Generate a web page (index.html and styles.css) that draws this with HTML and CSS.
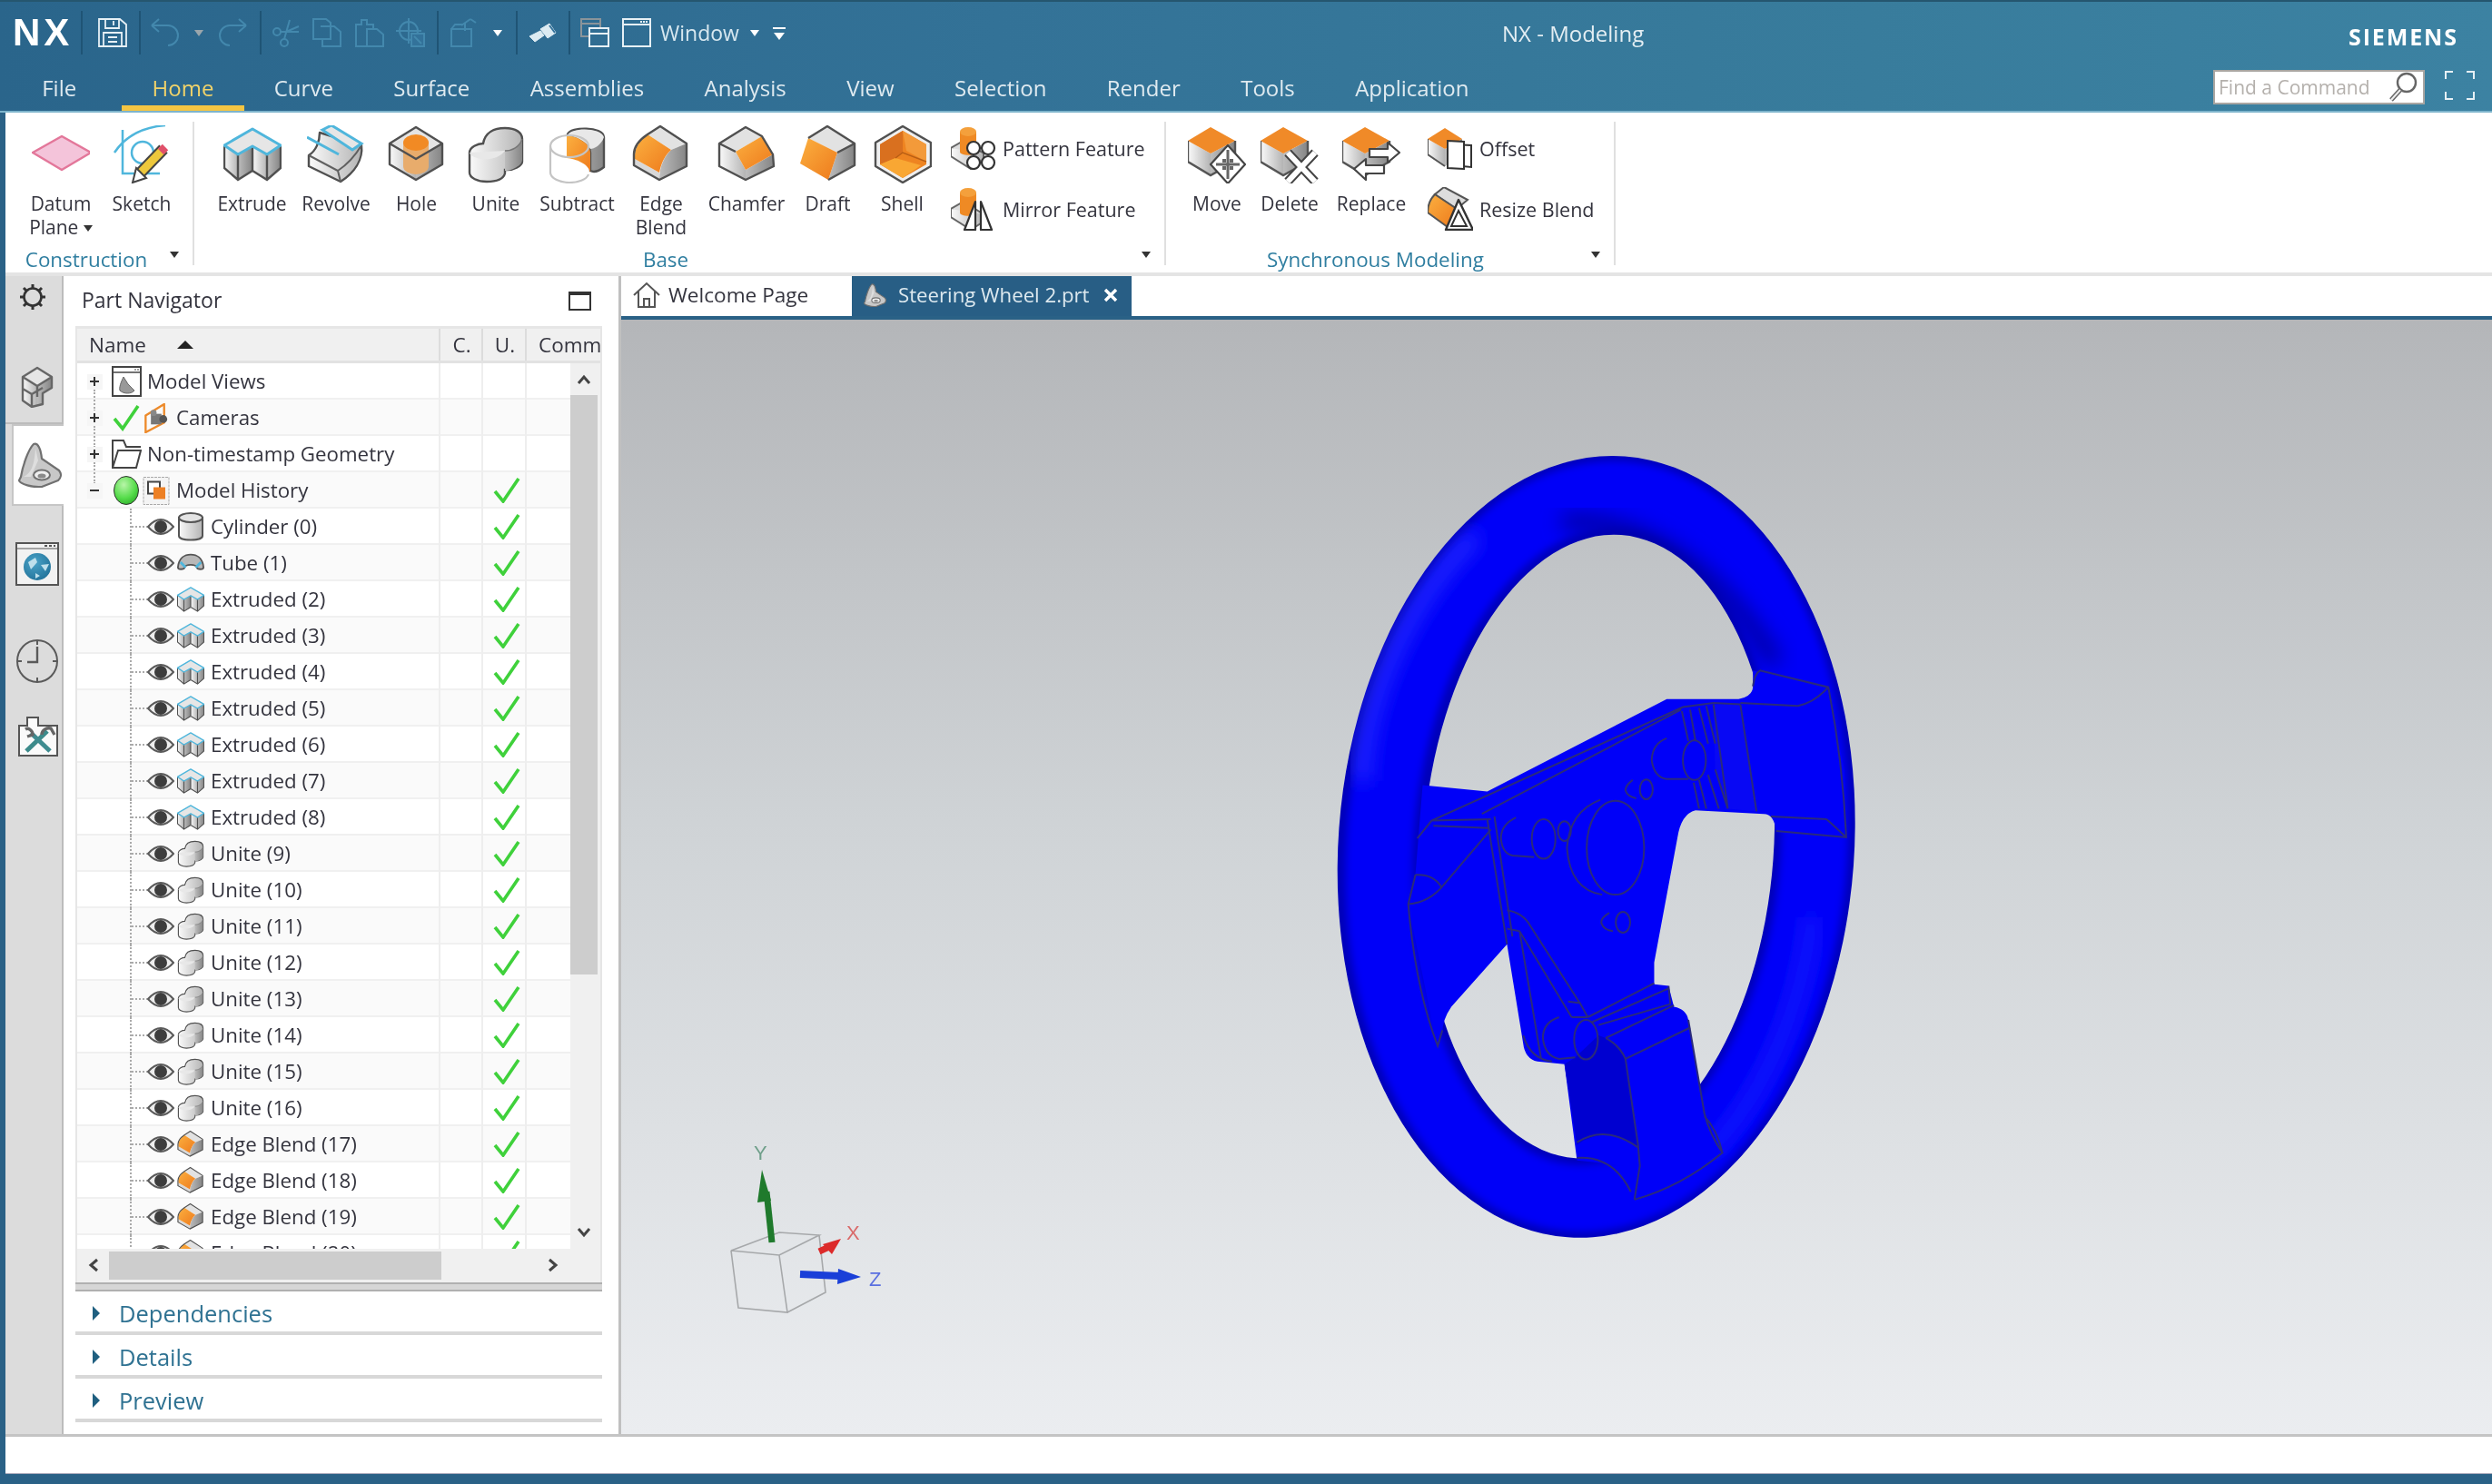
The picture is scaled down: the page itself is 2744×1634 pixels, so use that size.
FILE: index.html
```html
<!DOCTYPE html>
<html lang="en">
<head>
<meta charset="utf-8">
<title>NX - Modeling</title>
<link rel="stylesheet" href="styles.css">
</head>
<body>
<svg class="defs" aria-hidden="true">
  <defs>
    <linearGradient id="gl" x1="0" x2="1" y1="0" y2="0"><stop offset="0" stop-color="#fafafa"/><stop offset="1" stop-color="#b4b4b4"/></linearGradient>
    <linearGradient id="gd" x1="0" x2="1" y1="0" y2="0"><stop offset="0" stop-color="#bdbdbd"/><stop offset="1" stop-color="#858585"/></linearGradient>
    <linearGradient id="go" x1="0" x2="1" y1="0" y2="1"><stop offset="0" stop-color="#fbb040"/><stop offset="1" stop-color="#ee7a1c"/></linearGradient>
    <radialGradient id="gball" cx=".4" cy=".3" r=".8"><stop offset="0" stop-color="#b8f5a8"/><stop offset=".6" stop-color="#55dc4a"/><stop offset="1" stop-color="#2aa828"/></radialGradient>
    <radialGradient id="gglobe" cx=".4" cy=".35" r=".8"><stop offset="0" stop-color="#4aa3c8"/><stop offset="1" stop-color="#1d6c94"/></radialGradient>
  </defs>
  <symbol id="i-datum" viewBox="0 0 64 64"><path d="M1 30 33 12 65 30 33 49Z" fill="#f4c4da" stroke="#e3779a" stroke-width="2.5" stroke-linejoin="round"/></symbol>
  <symbol id="i-sketch" viewBox="0 0 64 64"><g fill="none" stroke="#4fb6dc" stroke-width="2.5"><path d="M2 30Q20 3 58 0"/><path d="M11 5V53H52"/><circle cx="33" cy="30" r="12"/></g><path d="M29 54 56 26" stroke="#444" stroke-width="13"/><path d="M29 54 56 26" stroke="#edc83c" stroke-width="9"/><path d="M53 29 58 24" stroke="#e0506a" stroke-width="9"/><path d="M22 63 26 47 37 58Z" fill="#fff" stroke="#444" stroke-width="2"/></symbol>
  <symbol id="i-extrude" viewBox="0 0 64 64"><path d="M1 22 16 32V60L1 47Z" fill="url(#gl)"/><path d="M16 32 32 23V50L16 60Z" fill="url(#gd)"/><path d="M32 23 48 32V60L32 50Z" fill="url(#gl)"/><path d="M48 32 63 22V47L48 60Z" fill="url(#gd)"/><path d="M1 22V47L16 60 32 50 48 60 63 47V22M16 32V60M32 23V50M48 32V60" fill="none" stroke="#505050" stroke-width="2.4"/><path d="M1 22 32 4 63 22 48 32 32 23 16 32Z" fill="#e6e6e6" stroke="#4fb6dc" stroke-width="3" stroke-linejoin="round"/></symbol>
  <symbol id="i-revolve" viewBox="0 0 64 64"><path d="M14 8 60 22C62 38 52 52 37 62L2 45V33C10 28 14 18 14 8Z" fill="url(#gl)" stroke="#505050" stroke-width="2.4" stroke-linejoin="round"/><path d="M2 33 34 50 37 62M34 50C46 42 54 32 60 22" fill="none" stroke="#606060" stroke-width="2"/><path d="M17 5 27 0 60 20 50 27Z" fill="#e6e6e6" stroke="#4fb6dc" stroke-width="3"/><path d="M0 13 35 32" stroke="#4fb6dc" stroke-width="3"/></symbol>
  <symbol id="i-hole" viewBox="0 0 64 64"><path d="M2 20 31 37V60L2 43Z" fill="url(#gl)"/><path d="M31 37 60 20V43L31 60Z" fill="url(#gd)"/><path d="M31 2 60 20 31 37 2 20Z" fill="#e4e4e4"/><path d="M17 19V45A14 9 0 0 0 45 45V19Z" fill="#e8ac6c"/><ellipse cx="31" cy="19" rx="14" ry="9" fill="#f18a24"/><path d="M31 2 60 20V43L31 60 2 43V20ZM2 20 31 37 60 20" fill="none" stroke="#505050" stroke-width="2.4" stroke-linejoin="round"/></symbol>
  <symbol id="i-unite" viewBox="0 0 64 64"><path d="M3 30C3 24 12 20 18 20 20 8 30 3 42 3 54 3 61 8 61 15V40C61 44 52 50 42 49V53C40 60 30 62 22 62 12 62 3 58 3 52Z" fill="url(#gl)" stroke="#505050" stroke-width="2.4"/><path d="M42 28V50C50 50 61 44 61 38V16C58 24 50 28 42 28Z" fill="url(#gd)"/><path d="M3 30C5 38 32 42 42 28" fill="#e8e8e8" stroke="none"/><path d="M61 15C58 24 50 28 42 28" fill="none" stroke="#777" stroke-width="1.5"/></symbol>
  <symbol id="i-subtract" viewBox="0 0 64 64"><path d="M21 10C24 1 60 1 61 13V46C56 50 50 52 46 50V30C46 20 32 12 21 11Z" fill="url(#gd)" stroke="#505050" stroke-width="2.4"/><path d="M21 11C24 2 58 2 61 13 58 22 50 26 46 26 42 18 30 12 21 11Z" fill="#e8e8e8"/><path d="M20 11C32 12 46 20 46 30V52C44 42 30 37 20 36Z" fill="url(#go)"/><ellipse cx="23" cy="23" rx="21" ry="12" fill="none" stroke="#c4c4c4" stroke-width="2.2"/><path d="M2 23V52C2 58 12 63 23 63 32 63 42 60 44 54" fill="none" stroke="#c4c4c4" stroke-width="2.2"/></symbol>
  <symbol id="i-edge" viewBox="0 0 64 64"><path d="M31 1 60 20 43 27 17 10Z" fill="#e2e2e2"/><path d="M43 27 60 20V45L30 60C30 44 36 34 43 27Z" fill="url(#gd)"/><path d="M3 37 30 52 30 60 2 44Z" fill="#d8d8d8"/><path d="M17 10 43 27C36 33 32 42 30 52L3 37C2 26 8 16 17 10Z" fill="url(#go)"/><path d="M17 10 31 1 60 20V45L30 60 2 44V32C2 24 8 16 17 10Z" fill="none" stroke="#505050" stroke-width="2.4" stroke-linejoin="round"/></symbol>
  <symbol id="i-chamfer" viewBox="0 0 64 64"><path d="M31 2 49 12 20 29 2 20Z" fill="#e2e2e2"/><path d="M2 20 20 29 31 49V60L2 45Z" fill="url(#gl)"/><path d="M31 49 61 32 62 45 31 60Z" fill="url(#gd)"/><path d="M49 12 61 32 31 49 20 29Z" fill="url(#go)"/><path d="M31 2 49 12 61 32 62 45 31 60 2 45V20ZM2 20 20 29" fill="none" stroke="#505050" stroke-width="2.4" stroke-linejoin="round"/></symbol>
  <symbol id="i-draft" viewBox="0 0 64 64"><path d="M31 1 61 20 42 30 10 14Z" fill="#e2e2e2"/><path d="M42 30 61 20V44L32 60Z" fill="url(#gd)"/><path d="M10 14 42 30 32 60 1 42Z" fill="url(#go)"/><path d="M10 14 31 1 61 20V44L32 60M42 30 61 20" fill="none" stroke="#505050" stroke-width="2.4" stroke-linejoin="round"/></symbol>
  <symbol id="i-shell" viewBox="0 0 64 64"><path d="M32 1 63 19V45L32 63 2 45V19Z" fill="#efefef" stroke="#505050" stroke-width="2.4" stroke-linejoin="round"/><path d="M32 6 58 21V43L32 58 7 43V21Z" fill="#ee8421"/><path d="M7 21 32 6V30L24 36 7 43Z" fill="#d9701f"/><path d="M32 6 58 21V40L36 28Z" fill="#f39a3a"/><path d="M24 36 52 44 32 58 7 43Z" fill="#f9a733"/><path d="M24 36 32 30 58 40" fill="none" stroke="#b85e14" stroke-width="1.5"/></symbol>
  <symbol id="i-cube" viewBox="0 0 64 64"><path d="M0 17 25 31V55L0 40Z" fill="url(#gl)"/><path d="M25 31 52 17V40L25 55Z" fill="url(#gd)"/><path d="M25 2 52 17 25 31 0 17Z" fill="#f08a28"/><path d="M0 17V40L25 55 52 40V17" fill="none" stroke="#555" stroke-width="2.4"/></symbol>
  <symbol id="i-move" viewBox="0 0 64 64"><use href="#i-cube" width="64" height="64"/><path d="M44 22 63 43 44 64 25 43Z" fill="#fff" stroke="#444" stroke-width="2.2" stroke-linejoin="round"/><path d="M44 27V59M31 43H57" stroke="#666" stroke-width="3"/><path d="M38 37h4v4h-4zM46 37h4v4h-4zM38 45h4v4h-4zM46 45h4v4h-4z" fill="#666"/></symbol>
  <symbol id="i-delete" viewBox="0 0 64 64"><use href="#i-cube" width="64" height="64"/><path d="M30 30 60 62M60 30 30 62" stroke="#444" stroke-width="10"/><path d="M30 30 60 62M60 30 30 62" stroke="#fff" stroke-width="6"/></symbol>
  <symbol id="i-replace" viewBox="0 0 64 64"><use href="#i-cube" width="64" height="64"/><path d="M30 26H50V19L63 30 50 41V35H30Z" fill="#fff" stroke="#444" stroke-width="2.2" stroke-linejoin="round"/><path d="M46 44H26V37L13 48 26 60V53H46Z" fill="#fff" stroke="#444" stroke-width="2.2" stroke-linejoin="round"/></symbol>
  <symbol id="i-offset" viewBox="0 0 50 48"><path d="M0 14 19 25V44L0 31Z" fill="url(#gl)"/><path d="M19 25 38 14V31L19 44Z" fill="url(#gd)"/><path d="M19 2 38 14 19 25 0 14Z" fill="#f08a28"/><path d="M0 14V31L19 44" fill="none" stroke="#555" stroke-width="2"/><path d="M27 20 48 21V45L38 44" fill="#fff" stroke="#333" stroke-width="2"/><path d="M22 16 40 17V47L22 46Z" fill="#fff" stroke="#333" stroke-width="2"/></symbol>
  <symbol id="i-resize" viewBox="0 0 50 48"><path d="M18 0 44 14 32 24 8 8Z" fill="#ddd" stroke="#555" stroke-width="2"/><path d="M8 8 32 24 22 44 0 28C0 20 2 14 8 8Z" fill="url(#go)" stroke="#555" stroke-width="2"/><path d="M34 14 50 47H20Z" fill="#fff" stroke="#333" stroke-width="2.4" stroke-linejoin="round"/><path d="M34 26 43 43H26Z" fill="#fff" stroke="#333" stroke-width="2"/></symbol>
  <symbol id="i-base" viewBox="0 0 50 48"><path d="M0 24 14 16 36 30 22 38Z" fill="#ddd" stroke="#666" stroke-width="2"/><path d="M0 24V33L22 47 36 38V30" fill="url(#gl)" stroke="#666" stroke-width="2"/><path d="M10 6V28C10 33 28 33 28 28V6Z" fill="#ef8a24"/><ellipse cx="19" cy="6" rx="9" ry="5" fill="#f4a03c"/></symbol>
  <symbol id="i-pattern" viewBox="0 0 50 48"><use href="#i-base" width="50" height="48"/><g fill="#fff" stroke="#333" stroke-width="2.2"><circle cx="25" cy="24" r="7"/><circle cx="41" cy="24" r="7"/><circle cx="25" cy="40" r="7"/><circle cx="41" cy="40" r="7"/></g></symbol>
  <symbol id="i-mirror" viewBox="0 0 50 48"><use href="#i-base" width="50" height="48"/><path d="M27 16 15 47H27ZM33 16 45 47H33Z" fill="#fff" stroke="#333" stroke-width="2.2" stroke-linejoin="round"/></symbol>
  <symbol id="i-eye" viewBox="0 0 30 24"><path d="M1 12Q15-4 29 12 15 28 1 12Z" fill="#eee" stroke="#5a5a5a" stroke-width="2"/><circle cx="15" cy="12" r="7" fill="#3d3d3d"/></symbol>
  <symbol id="i-cyl" viewBox="0 0 30 32"><path d="M2 6V26C2 32 28 32 28 26V6Z" fill="url(#gl)" stroke="#555" stroke-width="2"/><ellipse cx="15" cy="6" rx="13" ry="5" fill="#e4e4e4" stroke="#555" stroke-width="2"/></symbol>
  <symbol id="i-tube" viewBox="0 0 32 32"><path d="M1 21C2 10 9 6 16 6 23 6 30 10 31 21 31 24 24 24 23 21 22 17 10 17 9 21 8 24 1 24 1 21Z" fill="#b8b8b8" stroke="#555" stroke-width="2"/><path d="M4 15 10 21M28 15 22 21" stroke="#4fb6dc" stroke-width="3"/></symbol>
  <symbol id="i-check" viewBox="0 0 30 28"><path d="M2 15 11 26 28 1" fill="none" stroke="#3fd13b" stroke-width="3.6"/></symbol>
  <symbol id="i-plus" viewBox="0 0 16 16"><path d="M3 8H13M8 3V13" stroke="#333" stroke-width="2"/></symbol>
  <symbol id="i-minus" viewBox="0 0 16 16"><path d="M3 8H13" stroke="#333" stroke-width="2"/></symbol>
  <symbol id="i-views" viewBox="0 0 33 34"><rect x="1" y="1" width="31" height="32" fill="#fff" stroke="#444" stroke-width="2"/><path d="M1 7H32" stroke="#444" stroke-width="1.5"/><path d="M25 4H30" stroke="#444" stroke-dasharray="2 1"/><path d="M13 12C10 18 8 24 9 27 13 31 22 31 25 27L18 20Z" fill="#999" stroke="#666"/></symbol>
  <symbol id="i-camera" viewBox="0 0 30 34"><path d="M3 14 24 1V22L3 33Z" fill="none" stroke="#ed8a2a" stroke-width="2.4"/><rect x="9" y="12" width="12" height="12" fill="#777"/><circle cx="23" cy="18" r="4.5" fill="#555"/><circle cx="12" cy="11" r="3.5" fill="#888"/></symbol>
  <symbol id="i-folder" viewBox="0 0 33 34"><path d="M1 32V2H13L16 9H32" fill="none" stroke="#444" stroke-width="2"/><path d="M1 32 7 13H32L27 32Z" fill="#fff" stroke="#444" stroke-width="2"/></symbol>
  <symbol id="i-history" viewBox="0 0 30 32"><rect x="1" y="1" width="28" height="30" fill="#f4f4f4" stroke="#aaa" stroke-dasharray="3 1"/><rect x="6" y="6" width="13" height="13" fill="#fff" stroke="#444" stroke-width="2"/><rect x="12" y="12" width="13" height="13" fill="#ed8024"/></symbol>
  <symbol id="i-part" viewBox="0 0 50 50"><path d="M5 38C7 26 13 8 19 2 24 0 27 8 28 18L47 31C50 35 50 38 46 42L28 49C18 50 4 46 3 42Z" fill="#c8c8c8" stroke="#707070" stroke-width="2.2" stroke-linejoin="round"/><path d="M8 38C16 34 20 26 21 6L24 20 16 38Z" fill="#dedede"/><ellipse cx="28" cy="36" rx="9" ry="5.5" fill="#eee" stroke="#707070" stroke-width="2"/><ellipse cx="28" cy="37" rx="4.5" ry="2.6" fill="#8a8a8a"/></symbol>
</svg>

<div class="app">
  <header class="topbar">
    <div class="qat">
      <div class="logo">NX</div>
      <span class="sep"></span>
      <svg class="qi m4" viewBox="0 0 32 32"><g fill="none" stroke="#e6f0f5" stroke-width="1.8"><path d="M1 1H24L31 7V31H1Z"/><path d="M8 1V11H23V1M17 3V8"/><path d="M6 31V16H26V31M11 21H21M11 26H21"/></g></svg>
      <span class="sep"></span>
      <svg class="qi n3" viewBox="0 0 32 32"><path d="M2 8 10 1M2 8 10 15M2 8H20A11 11 0 0 1 20 30" fill="none" stroke="#4388ad" stroke-width="2"/></svg>
      <span class="caret dim m4"></span>
      <svg class="qi m4" viewBox="0 0 32 32"><path d="M30 8 22 1M30 8 22 15M30 8H12A11 11 0 0 0 12 30" fill="none" stroke="#4388ad" stroke-width="2"/></svg>
      <span class="sep"></span>
      <svg class="qi n2" viewBox="0 0 32 32"><g fill="none" stroke="#4388ad" stroke-width="2"><circle cx="6" cy="15" r="4"/><circle cx="14" cy="27" r="4"/><path d="M10 15H30M14 23 20 2M16 15 30 9"/></g></svg>
      <svg class="qi" viewBox="0 0 32 32"><path d="M1 23V1H15L20 5V23ZM9 9H24L31 15V31H11V23" fill="none" stroke="#4388ad" stroke-width="2"/></svg>
      <svg class="qi m2" viewBox="0 0 32 32"><path d="M14 31H1V7H7V2H13V7H20V12M13 12H24L31 18V31H13Z" fill="none" stroke="#4388ad" stroke-width="2"/></svg>
      <svg class="qi" viewBox="0 0 32 32"><g fill="none" stroke="#4388ad" stroke-width="2"><circle cx="14" cy="14" r="10"/><path d="M14 0V28M0 14H28"/><rect x="17" y="17" width="14" height="14" fill="#33729a"/><path d="M20 20 28 28"/></g></svg>
      <span class="sep"></span>
      <svg class="qi" viewBox="0 0 32 32"><path d="M1 12V31H23V12ZM1 12 5 7H14M16 14V5M12 8 22 1M22 1 28 5" fill="none" stroke="#4388ad" stroke-width="2"/></svg>
      <span class="caret m2"></span>
      <span class="sep m2"></span>
      <svg class="qi n2" viewBox="0 0 32 32"><path d="M2 20 14 14 18 19 8 26ZM14 12 24 6 31 16 22 22Z" fill="#dcebf2" stroke="#dcebf2"/><path d="M24 8 30 16" stroke="#33729a" stroke-width="2"/></svg>
      <span class="sep"></span>
      <svg class="qi n2" viewBox="0 0 32 32"><path d="M10 20H1V1H22V10M1 6H22" fill="none" stroke="#8a949a" stroke-width="2"/><path d="M10 11H31V31H10ZM10 17H31" fill="none" stroke="#e6f0f5" stroke-width="2"/></svg>
      <svg class="qi m1" viewBox="0 0 32 32"><path d="M1 1H31V31H1ZM1 7H31" fill="none" stroke="#e6f0f5" stroke-width="2"/><path d="M20 4H28" stroke="#e6f0f5" stroke-dasharray="2 1" stroke-width="2"/></svg>
      <span class="wintext">Window</span>
      <span class="caret n4"></span>
      <span class="more m2"></span>
      <span class="title">NX - Modeling</span>
      <span class="siemens">SIEMENS</span>
    </div>
    <nav class="menu">
      <span class="mtab first">File</span>
      <span class="mtab active">Home</span>
      <span class="mtab">Curve</span>
      <span class="mtab">Surface</span>
      <span class="mtab">Assemblies</span>
      <span class="mtab">Analysis</span>
      <span class="mtab">View</span>
      <span class="mtab">Selection</span>
      <span class="mtab">Render</span>
      <span class="mtab">Tools</span>
      <span class="mtab">Application</span>
      <div class="search">
        <span class="placeholder">Find a Command</span>
        <svg class="glass" viewBox="0 0 32 34"><circle cx="20" cy="12" r="10" fill="#fff" stroke="#666" stroke-width="2.4"/><path d="M13 20 3 31" stroke="#666" stroke-width="5"/><path d="M13 20 3 31" stroke="#eee" stroke-width="2"/></svg>
      </div>
      <svg class="full" viewBox="0 0 33 32"><path d="M1 9V1H9M24 1H32V9M1 23V31H9M24 31H32V23" fill="none" stroke="#e6f0f5" stroke-width="2"/></svg>
    </nav>
  </header>

  <section class="ribbon">
    <div class="group g-con">
      <div class="cmds">
        <div class="btn w90"><svg class="ic"><use href="#i-datum"/></svg><span>Datum<br>Plane <i class="mini"></i></span></div>
        <div class="btn w88"><svg class="ic"><use href="#i-sketch"/></svg><span>Sketch</span></div>
      </div>
      <div class="glabel gl-con">Construction<i class="gcaret"></i></div>
    </div>
    <div class="group g-base">
      <div class="cmds">
        <div class="btn w95"><svg class="ic"><use href="#i-extrude"/></svg><span>Extrude</span></div>
        <div class="btn w90"><svg class="ic"><use href="#i-revolve"/></svg><span>Revolve</span></div>
        <div class="btn w87"><svg class="ic"><use href="#i-hole"/></svg><span>Hole</span></div>
        <div class="btn w88"><svg class="ic"><use href="#i-unite"/></svg><span>Unite</span></div>
        <div class="btn w91"><svg class="ic"><use href="#i-subtract"/></svg><span>Subtract</span></div>
        <div class="btn w94"><svg class="ic"><use href="#i-edge"/></svg><span>Edge<br>Blend</span></div>
        <div class="btn w94"><svg class="ic"><use href="#i-chamfer"/></svg><span>Chamfer</span></div>
        <div class="btn w85"><svg class="ic"><use href="#i-draft"/></svg><span>Draft</span></div>
        <div class="btn w79"><svg class="ic"><use href="#i-shell"/></svg><span>Shell</span></div>
        <div class="col col-base">
          <div class="smbtn"><svg class="ics"><use href="#i-pattern"/></svg><span>Pattern Feature</span></div>
          <div class="smbtn"><svg class="ics"><use href="#i-mirror"/></svg><span>Mirror Feature</span></div>
        </div>
      </div>
      <div class="glabel gl-base">Base<i class="gcaret"></i></div>
    </div>
    <div class="group g-sync">
      <div class="cmds">
        <div class="btn w80"><svg class="ic"><use href="#i-move"/></svg><span>Move</span></div>
        <div class="btn w80"><svg class="ic"><use href="#i-delete"/></svg><span>Delete</span></div>
        <div class="btn w100"><svg class="ic"><use href="#i-replace"/></svg><span>Replace</span></div>
        <div class="col col-sync">
          <div class="smbtn"><svg class="ics"><use href="#i-offset"/></svg><span>Offset</span></div>
          <div class="smbtn"><svg class="ics"><use href="#i-resize"/></svg><span>Resize Blend</span></div>
        </div>
      </div>
      <div class="glabel gl-sync">Synchronous Modeling<i class="gcaret"></i></div>
    </div>
  </section>

  <div class="workspace">
    <aside class="side">
      <svg class="gear" viewBox="0 0 30 30"><g fill="none" stroke="#333"><circle cx="15" cy="15" r="9.5" stroke-width="2.6"/><path d="M15 1V6M15 24V29M1 15H6M24 15H29M5 5 8 8M22 22 25 25M5 25 8 22M22 8 25 5" stroke-width="3"/></g></svg>
      <div class="stab tab-cube"><svg class="s-cube" viewBox="0 0 36 48"><path d="M2 14 18 24V46L12 47 2 40Z" fill="url(#gl)"/><path d="M18 24 34 14V26L24 32V44L18 46Z" fill="url(#gd)"/><path d="M2 14 18 4 34 14 18 24Z" fill="#e6e6e6"/><path d="M2 14 18 4 34 14V26L24 32V44L12 47 2 40ZM2 14 18 24 34 14M18 24V36M2 27 12 33V47M12 33 24 26" fill="none" stroke="#666" stroke-width="2.4" stroke-linejoin="round"/></svg></div>
      <div class="stab on"><svg class="s-part"><use href="#i-part"/></svg></div>
      <div class="stab tab-globe"><svg class="s-win" viewBox="0 0 48 48"><rect x="1" y="1" width="46" height="46" fill="#f2f2f2" stroke="#555" stroke-width="2"/><path d="M1 7H47" stroke="#555"/><path d="M32 4H44" stroke="#555" stroke-dasharray="3 2" stroke-width="2"/><circle cx="24" cy="27" r="15" fill="url(#gglobe)"/><path d="M14 22 22 17 24 22 17 30ZM28 25 37 24 33 32ZM22 34 27 37 22 40Z" fill="#bfe0ec"/></svg></div>
      <div class="stab tab-clock"><svg class="s-clock" viewBox="0 0 46 48"><g fill="none" stroke="#5a5a5a"><ellipse cx="23" cy="24" rx="22" ry="23" stroke-width="2"/><path d="M23 1V6M23 42V47M1 24H6M40 24H45" stroke-width="2"/><path d="M23 8V25H12" stroke-width="2.4"/></g></svg></div>
      <div class="stab tab-tool"><svg class="s-tool" viewBox="0 0 44 44"><path d="M1 10H10V1H22V10H43V43H1Z" fill="#fafafa" stroke="#555" stroke-width="2"/><path d="M9 38 32 16" stroke="#3c8a8a" stroke-width="5"/><path d="M35 38 14 18" stroke="#3f8c90" stroke-width="5"/><path d="M26 20C26 14 32 12 36 13L40 20" fill="none" stroke="#666" stroke-width="3.4"/><path d="M8 14C11 12 16 15 16 20L10 22" fill="none" stroke="#666" stroke-width="3.4"/></svg></div>
    </aside>

    <section class="panel">
      <div class="phead"><span>Part Navigator</span><i class="maxi"></i></div>
      <div class="grid">
        <div class="ghead">
          <div class="hc hname"><span>Name</span><i class="sort"></i></div>
          <div class="hc hsm">C.</div>
          <div class="hc hsm">U.</div>
          <div class="hc hcom">Comm</div>
        </div>
        <div class="gbody">
          <div class="rows">
            <div class="row"><div class="nm"><span class="exp ln"><svg><use href="#i-plus"/></svg></span><svg class="tic"><use href="#i-views"/></svg><span class="t">Model Views</span></div><i></i><i></i><i></i></div>
            <div class="row"><div class="nm"><span class="exp ln"><svg><use href="#i-plus"/></svg></span><svg class="tic chk0"><use href="#i-check"/></svg><svg class="tic2"><use href="#i-camera"/></svg><span class="t">Cameras</span></div><i></i><i></i><i></i></div>
            <div class="row"><div class="nm"><span class="exp ln"><svg><use href="#i-plus"/></svg></span><svg class="tic"><use href="#i-folder"/></svg><span class="t">Non-timestamp Geometry</span></div><i></i><i></i><i></i></div>
            <div class="row"><div class="nm"><span class="exp"><svg><use href="#i-minus"/></svg></span><svg class="tic chk0" viewBox="0 0 30 32"><ellipse cx="15" cy="16" rx="13.5" ry="15.5" fill="url(#gball)" stroke="#333" stroke-width="1"/></svg><svg class="tic2"><use href="#i-history"/></svg><span class="t">Model History</span></div><i></i><i class="ok"><svg><use href="#i-check"/></svg></i><i></i></div>
            <div class="row"><div class="nm"><span class="guide"></span><svg class="eye"><use href="#i-eye"/></svg><svg class="fe"><use href="#i-cyl"/></svg><span class="t">Cylinder (0)</span></div><i></i><i class="ok"><svg><use href="#i-check"/></svg></i><i></i></div>
            <div class="row"><div class="nm"><span class="guide"></span><svg class="eye"><use href="#i-eye"/></svg><svg class="fe"><use href="#i-tube"/></svg><span class="t">Tube (1)</span></div><i></i><i class="ok"><svg><use href="#i-check"/></svg></i><i></i></div>
            <div class="row"><div class="nm"><span class="guide"></span><svg class="eye"><use href="#i-eye"/></svg><svg class="fe"><use href="#i-extrude"/></svg><span class="t">Extruded (2)</span></div><i></i><i class="ok"><svg><use href="#i-check"/></svg></i><i></i></div>
            <div class="row"><div class="nm"><span class="guide"></span><svg class="eye"><use href="#i-eye"/></svg><svg class="fe"><use href="#i-extrude"/></svg><span class="t">Extruded (3)</span></div><i></i><i class="ok"><svg><use href="#i-check"/></svg></i><i></i></div>
            <div class="row"><div class="nm"><span class="guide"></span><svg class="eye"><use href="#i-eye"/></svg><svg class="fe"><use href="#i-extrude"/></svg><span class="t">Extruded (4)</span></div><i></i><i class="ok"><svg><use href="#i-check"/></svg></i><i></i></div>
            <div class="row"><div class="nm"><span class="guide"></span><svg class="eye"><use href="#i-eye"/></svg><svg class="fe"><use href="#i-extrude"/></svg><span class="t">Extruded (5)</span></div><i></i><i class="ok"><svg><use href="#i-check"/></svg></i><i></i></div>
            <div class="row"><div class="nm"><span class="guide"></span><svg class="eye"><use href="#i-eye"/></svg><svg class="fe"><use href="#i-extrude"/></svg><span class="t">Extruded (6)</span></div><i></i><i class="ok"><svg><use href="#i-check"/></svg></i><i></i></div>
            <div class="row"><div class="nm"><span class="guide"></span><svg class="eye"><use href="#i-eye"/></svg><svg class="fe"><use href="#i-extrude"/></svg><span class="t">Extruded (7)</span></div><i></i><i class="ok"><svg><use href="#i-check"/></svg></i><i></i></div>
            <div class="row"><div class="nm"><span class="guide"></span><svg class="eye"><use href="#i-eye"/></svg><svg class="fe"><use href="#i-extrude"/></svg><span class="t">Extruded (8)</span></div><i></i><i class="ok"><svg><use href="#i-check"/></svg></i><i></i></div>
            <div class="row"><div class="nm"><span class="guide"></span><svg class="eye"><use href="#i-eye"/></svg><svg class="fe"><use href="#i-unite"/></svg><span class="t">Unite (9)</span></div><i></i><i class="ok"><svg><use href="#i-check"/></svg></i><i></i></div>
            <div class="row"><div class="nm"><span class="guide"></span><svg class="eye"><use href="#i-eye"/></svg><svg class="fe"><use href="#i-unite"/></svg><span class="t">Unite (10)</span></div><i></i><i class="ok"><svg><use href="#i-check"/></svg></i><i></i></div>
            <div class="row"><div class="nm"><span class="guide"></span><svg class="eye"><use href="#i-eye"/></svg><svg class="fe"><use href="#i-unite"/></svg><span class="t">Unite (11)</span></div><i></i><i class="ok"><svg><use href="#i-check"/></svg></i><i></i></div>
            <div class="row"><div class="nm"><span class="guide"></span><svg class="eye"><use href="#i-eye"/></svg><svg class="fe"><use href="#i-unite"/></svg><span class="t">Unite (12)</span></div><i></i><i class="ok"><svg><use href="#i-check"/></svg></i><i></i></div>
            <div class="row"><div class="nm"><span class="guide"></span><svg class="eye"><use href="#i-eye"/></svg><svg class="fe"><use href="#i-unite"/></svg><span class="t">Unite (13)</span></div><i></i><i class="ok"><svg><use href="#i-check"/></svg></i><i></i></div>
            <div class="row"><div class="nm"><span class="guide"></span><svg class="eye"><use href="#i-eye"/></svg><svg class="fe"><use href="#i-unite"/></svg><span class="t">Unite (14)</span></div><i></i><i class="ok"><svg><use href="#i-check"/></svg></i><i></i></div>
            <div class="row"><div class="nm"><span class="guide"></span><svg class="eye"><use href="#i-eye"/></svg><svg class="fe"><use href="#i-unite"/></svg><span class="t">Unite (15)</span></div><i></i><i class="ok"><svg><use href="#i-check"/></svg></i><i></i></div>
            <div class="row"><div class="nm"><span class="guide"></span><svg class="eye"><use href="#i-eye"/></svg><svg class="fe"><use href="#i-unite"/></svg><span class="t">Unite (16)</span></div><i></i><i class="ok"><svg><use href="#i-check"/></svg></i><i></i></div>
            <div class="row"><div class="nm"><span class="guide"></span><svg class="eye"><use href="#i-eye"/></svg><svg class="fe"><use href="#i-edge"/></svg><span class="t">Edge Blend (17)</span></div><i></i><i class="ok"><svg><use href="#i-check"/></svg></i><i></i></div>
            <div class="row"><div class="nm"><span class="guide"></span><svg class="eye"><use href="#i-eye"/></svg><svg class="fe"><use href="#i-edge"/></svg><span class="t">Edge Blend (18)</span></div><i></i><i class="ok"><svg><use href="#i-check"/></svg></i><i></i></div>
            <div class="row"><div class="nm"><span class="guide"></span><svg class="eye"><use href="#i-eye"/></svg><svg class="fe"><use href="#i-edge"/></svg><span class="t">Edge Blend (19)</span></div><i></i><i class="ok"><svg><use href="#i-check"/></svg></i><i></i></div>
            <div class="row"><div class="nm"><span class="guide"></span><svg class="eye"><use href="#i-eye"/></svg><svg class="fe"><use href="#i-edge"/></svg><span class="t">Edge Blend (20)</span></div><i></i><i class="ok"><svg><use href="#i-check"/></svg></i><i></i></div>
          </div>
          <div class="vscroll">
            <svg class="sarrow" viewBox="0 0 16 12"><path d="M2 10 8 3 14 10" fill="none" stroke="#444" stroke-width="3"/></svg>
            <div class="vthumb"></div>
            <svg class="sarrow down" viewBox="0 0 16 12"><path d="M2 2 8 9 14 2" fill="none" stroke="#444" stroke-width="3"/></svg>
          </div>
        </div>
        <div class="hscroll">
          <svg class="harrow" viewBox="0 0 12 16"><path d="M10 2 3 8 10 14" fill="none" stroke="#444" stroke-width="3"/></svg>
          <div class="hthumb"></div>
          <svg class="harrow right" viewBox="0 0 12 16"><path d="M2 2 9 8 2 14" fill="none" stroke="#444" stroke-width="3"/></svg>
        </div>
      </div>
      <div class="splitter"></div>
      <div class="acc"><i class="tri"></i><span>Dependencies</span></div>
      <div class="acc"><i class="tri"></i><span>Details</span></div>
      <div class="acc"><i class="tri"></i><span>Preview</span></div>
    </section>

    <main class="main">
      <div class="tabs">
        <div class="tab welcome">
          <svg class="home" viewBox="0 0 30 30"><path d="M1 15 15 2 29 15M6 11V28H24V11M12 28V19H18V28" fill="#fff" stroke="#555" stroke-width="2"/></svg>
          <span>Welcome Page</span>
        </div>
        <div class="tab current">
          <svg class="tabpart"><use href="#i-part"/></svg>
          <span>Steering Wheel 2.prt</span>
          <svg class="close" viewBox="0 0 16 16"><path d="M2 2 14 14M14 2 2 14" stroke="#fff" stroke-width="3.4"/></svg>
        </div>
      </div>
      <div class="view">
        <svg class="canvas" viewBox="684 352 2060 1227">
          <defs>
            <filter id="b4"><feGaussianBlur stdDeviation="4"/></filter>
            <filter id="b10"><feGaussianBlur stdDeviation="11"/></filter>
            <mask id="ringmask">
              <g transform="rotate(4.2 1757.7 932.4)">
                <ellipse cx="1757.7" cy="932.4" rx="284" ry="431" fill="#fff"/>
                <ellipse cx="1760" cy="932" rx="193" ry="344" fill="#000"/>
              </g>
            </mask>
          </defs>
          <g mask="url(#ringmask)">
            <rect x="1440" y="480" width="640" height="920" fill="#0000b8"/>
            <ellipse cx="1758.5" cy="932" rx="239" ry="388" fill="none" stroke="#0000f8" stroke-width="74" transform="rotate(4.2 1757.7 932.4)" filter="url(#b4)"/>
            <path d="M1500 860C1500 760 1560 650 1625 590" fill="none" stroke="#2c34ff" stroke-width="14" filter="url(#b10)"/>
            <path d="M1995 1010C1985 1110 1940 1210 1880 1270" fill="none" stroke="#1e24ff" stroke-width="12" filter="url(#b10)"/>
            <path d="M1720 575C1820 570 1900 640 1955 730" fill="none" stroke="#0000a8" stroke-width="20" filter="url(#b10)"/>
          </g>
          <g transform="translate(1440 480) scale(.3953 .574)">
            <path d="M320 670 500 682 1000 505 1200 505Q1240 500 1240 480L1240 450 1445 482 1495 640 1500 770 1305 760Q1300 725 1270 725L1080 718Q1040 725 1030 770L965 1010 965 1052 1005 1055 1020 1095 Q1055 1100 1060 1120L1105 1300 1155 1375 910 1465 890 1400 750 1390 715 1205 640 1200Q605 1195 600 1165L555 975 400 1095Q375 1120 375 1145L360 1170 280 900 300 840Z" fill="#0000f8"/>
            <path d="M715 1205 750 1360Q830 1320 920 1365L885 1195Q870 1170 830 1155L810 1150 745 1192Z" fill="#0000d0"/>
            <path d="M1130 515 1135 640 1170 715 1250 720 1205 515Z" fill="#0808f4"/>
            <g class="wire">
              <path d="M1240 480Q1245 455 1260 450L1450 482Q1490 620 1500 770L1305 758M1205 512 1365 518Q1410 512 1450 482M1445 735Q1470 750 1500 770M1290 730 1445 735"/>
              <path d="M1042 528 1060 585M1065 525 1080 585M1090 522 1115 590M1110 518 1135 590M1130 515 1170 715M1205 515 1250 720M1075 665 1090 715M1090 660 1110 715M1115 650 1145 715M1135 640 1170 715"/>
              <ellipse cx="1077" cy="622" rx="32" ry="38"/>
              <path d="M1000 580Q960 590 958 622 965 655 1000 658L1060 658"/>
              <ellipse cx="943" cy="678" rx="18" ry="19"/>
              <path d="M905 660Q885 670 885 680 890 692 915 695"/>
              <ellipse cx="857" cy="790" rx="80" ry="90"/>
              <path d="M815 698Q730 720 722 790 730 870 820 880"/>
              <ellipse cx="657" cy="773" rx="33" ry="38"/>
              <path d="M580 732Q540 745 538 770 540 800 570 805L630 808"/>
              <ellipse cx="715" cy="758" rx="18" ry="19"/>
              <ellipse cx="878" cy="933" rx="20" ry="20"/>
              <path d="M840 915Q815 925 818 935 825 948 850 950"/>
              <path d="M305 772 345 738 1045 520 1130 512 1205 515M485 725 1040 525M345 738 510 735M350 748 505 752M510 755 380 860Q340 895 280 898M300 842Q350 840 372 865M300 842 280 898Q300 1060 362 1170L375 1140"/>
              <path d="M500 735 555 975M520 730 570 960M555 910Q600 915 620 940L760 1090 780 1115M555 945 590 950 735 1115M590 950 650 1195M600 1150Q620 1195 680 1200M725 1085 760 1088M735 1115 780 1115"/>
              <ellipse cx="775" cy="1158" rx="33" ry="38"/>
              <path d="M700 1115Q655 1125 655 1155 660 1190 700 1195L745 1192"/>
              <path d="M780 1115 965 1050M790 1125 1005 1060M810 1130 1010 1090M830 1155 1020 1092M885 1195 1065 1135M1005 1055 1010 1090"/>
              <path d="M830 1155Q870 1170 885 1195L920 1360 925 1400 910 1465M1060 1120 1105 1300Q1120 1340 1155 1375 1040 1440 910 1465M1105 1305Q1140 1330 1155 1375M750 1355Q830 1320 920 1365M750 1385Q850 1380 900 1450"/>
            </g>
          </g>
          <g>
            <path d="M805 1377 858 1357 902 1360 858 1382ZM805 1377 813 1440 867 1445 858 1382M867 1445 909 1423 902 1360" fill="none" stroke="#a6a8aa" stroke-width="1.6"/>
            <path d="M850 1368 844 1312" stroke="#1f7a2c" stroke-width="7"/><path d="M839 1288 849 1322 834 1324Z" fill="#1f7a2c"/>
            <path d="M902 1378 915 1372" stroke="#dc2a2a" stroke-width="7"/><path d="M926 1364 916 1381 906 1370Z" fill="#dc2a2a"/>
            <path d="M881 1403 925 1405" stroke="#1a3fd8" stroke-width="8"/><path d="M948 1406 922 1414 923 1397Z" fill="#1a3fd8"/>
            <text x="830" y="1277" class="ax ay">Y</text><text x="932" y="1365" class="ax ax-x">X</text><text x="957" y="1416" class="ax az">Z</text>
          </g>
        </svg>
      </div>
    </main>
  </div>
  <div class="status"></div>
</div>
</body>
</html>
```
FILE: styles.css
```css
* { box-sizing: border-box; }
html, body { margin: 0; padding: 0; background: #2a6186; }
body { width: 2744px; height: 1634px; overflow: hidden; font-family: "Open Sans", "Noto Sans", sans-serif; color: #34343e; }
i { font-style: normal; }
.defs { position: absolute; width: 0; height: 0; }
.app { width: 2744px; height: 1634px; display: flex; flex-direction: column; filter: blur(.65px); background: #2a6186; }

/* title bar */
.topbar { height: 124px; flex: none; background: linear-gradient(90deg, #2a658b 0%, #337297 40%, #387c9c 75%, #3c82a2 100%); border-top: 2px solid #25566f; border-bottom: 2px solid #7eb4cc; }
.qat { height: 68px; display: flex; align-items: center; gap: 13px; padding-left: 14px; }
.logo { width: 62px; font: 700 42px/1 "Liberation Sans", sans-serif; color: #fff; letter-spacing: 4px; white-space: nowrap; }
.sep { width: 2px; height: 48px; background: #1f5475; }
.qi { width: 32px; height: 32px; flex: none; }
.m1 { margin-left: 1px; } .m2 { margin-left: 2px; } .m4 { margin-left: 4px; }
.n2 { margin-left: -2px; } .n3 { margin-left: -3px; } .n4 { margin-left: -4px; }
.caret { width: 0; height: 0; border: 5px solid transparent; border-top: 7px solid #fff; border-bottom: 0; }
.caret.dim { border-top-color: #9aa6ac; }
.wintext { font-size: 23px; color: #d8e8f0; width: 90px; margin-left: -3px; }
.more { width: 14px; height: 12px; border-top: 2px solid #fff; position: relative; }
.more::after { content: ""; position: absolute; left: 1px; top: 4px; border: 6px solid transparent; border-top: 8px solid #fff; border-bottom: 0; }
.title { margin-left: 776px; font-size: 24px; color: #e4eef3; }
.siemens { margin-left: auto; margin-right: 37px; margin-top: 8px; font: 700 25px/1 "Open Sans", sans-serif; letter-spacing: 1.9px; color: #fff; }
.menu { height: 54px; display: flex; align-items: flex-start; padding-left: 13px; position: relative; }
.mtab { height: 52px; padding: 8px 33.2px 0; font-size: 24px; line-height: 38px; color: #dfeaf0; border-bottom: 6px solid transparent; }
.mtab.first { margin-right: 17px; }
.mtab.active { color: #f1d36a; border-bottom-color: #f5c542; }
.search { margin-left: auto; margin-top: 7px; width: 233px; height: 38px; background: #fff; border: 2px solid #a9a6a2; display: flex; align-items: center; justify-content: space-between; padding: 0 6px 0 4px; }
.placeholder { font-size: 21px; color: #b4b0ac; }
.glass { width: 32px; height: 34px; }
.full { width: 33px; height: 32px; margin: 8px 19px 0 22px; flex: none; }

/* ribbon */
.ribbon { height: 180px; flex: none; margin-left: 6px; background: #fff; border-bottom: 4px solid #e4e4e4; display: flex; padding-top: 10px; align-items: flex-start; }
.group { height: 158px; border-right: 2px solid #e0e0e0; display: flex; flex-direction: column; }
.g-con { width: 208px; padding-left: 16px; }
.g-base { width: 1070px; padding-left: 16px; }
.g-sync { width: 495px; padding-left: 16px; }
.cmds { height: 138px; display: flex; align-items: flex-start; }
.btn { display: flex; flex-direction: column; align-items: center; padding-top: 4px; flex: none; font-size: 21px; line-height: 26px; text-align: center; }
.ic { width: 64px; height: 64px; margin-bottom: 9px; display: block; }
.w79 { width: 79px; } .w80 { width: 80px; } .w85 { width: 85px; } .w87 { width: 87px; } .w88 { width: 88px; } .w90 { width: 90px; } .w91 { width: 91px; } .w94 { width: 94px; } .w95 { width: 95px; } .w100 { width: 100px; }
.mini { display: inline-block; width: 0; height: 0; border: 5px solid transparent; border-top: 7px solid #333; border-bottom: 0; vertical-align: 3px; }
.col { display: flex; flex-direction: column; gap: 19px; padding-top: 5px; }
.col-base { margin-left: 14px; }
.col-sync { margin-left: 12px; }
.smbtn { display: flex; align-items: center; height: 48px; font-size: 21.5px; }
.ics { width: 50px; height: 48px; margin-right: 7px; flex: none; }
.glabel { height: 20px; line-height: 28px; font-size: 22.4px; color: #2f7ea0; text-align: center; position: relative; }
.gl-con { margin-left: -16px; padding-right: 28px; }
.gl-base { margin-left: -16px; padding-right: 30px; }
.gl-sync { margin-left: -16px; padding-right: 32px; }
.gcaret { position: absolute; right: 15px; top: 5px; width: 0; height: 0; border: 5px solid transparent; border-top: 7px solid #333; border-bottom: 0; }

/* workspace */
.workspace { height: 1275px; flex: none; display: flex; margin-left: 6px; }
.side { width: 64px; flex: none; background: #dcdcdc; border-right: 2px solid #bcbcbc; display: flex; flex-direction: column; align-items: center; }
.gear { width: 30px; height: 30px; margin: 8px 3px 0 0; flex: none; }
.stab { flex: none; display: flex; justify-content: center; align-items: center; width: 62px; }
.tab-cube { height: 125px; border-bottom: 2px solid #bcbcbc; padding: 42px 0 0 8px; }
.stab.on { height: 90px; background: #fff; border: 2px solid #c6c6c6; border-right: 0; width: 57px; margin-left: 7px; margin-right: -2px; padding-left: 0; }
.s-cube { width: 36px; height: 48px; }
.s-part { width: 50px; height: 50px; }
.tab-globe { height: 95px; padding: 32px 0 0 8px; }
.s-win { width: 48px; height: 48px; }
.tab-clock { height: 105px; padding: 46px 0 0 7px; }
.s-clock { width: 46px; height: 48px; }
.tab-tool { height: 85px; padding: 23px 0 0 9px; }
.s-tool { width: 44px; height: 44px; }

.panel { width: 614px; flex: none; background: #fff; border-right: 3px solid #c0c0c0; padding-left: 13px; display: flex; flex-direction: column; }
.phead { height: 55px; display: flex; align-items: center; justify-content: space-between; padding: 0 30px 4px 7px; font-size: 23px; flex: none; }
.maxi { width: 25px; height: 21px; border: 2px solid #333; border-top-width: 4px; display: block; margin-top: 4px; }
.grid { width: 580px; height: 1053px; flex: none; border: 2px solid #e6e6e6; border-bottom: 0; background: #f0f0f0; display: flex; flex-direction: column; }
.ghead { height: 39px; flex: none; display: grid; grid-template-columns: 400px 47px 48px 81px; border-top: 1px solid #e6e6e6; border-bottom: 3px solid #e2e2e2; background: #f0f0f0; font-size: 22.5px; }
.hc { display: flex; align-items: center; border-right: 2px solid #dcdcdc; overflow: hidden; white-space: nowrap; }
.hname { padding-left: 13px; gap: 34px; }
.sort { width: 0; height: 0; border: 9px solid transparent; border-bottom: 9px solid #222; border-top: 0; }
.hsm { justify-content: center; padding-left: 2px; }
.hcom { padding-left: 13px; border-right: 0; }
.gbody { height: 975px; flex: none; display: flex; overflow: hidden; background: #fff; }
.rows { width: 543px; flex: none; }
.row { height: 40px; display: grid; grid-template-columns: 400px 47px 48px 48px; background: #fff; box-shadow: inset 0 -2px 0 #f0f0f0; }
.row:nth-child(even) { background: #fafafa; }
.row > i { border-left: 2px solid #eee; display: flex; align-items: center; justify-content: center; margin-left: -2px; }
.ok svg { width: 30px; height: 28px; margin-left: 3px; }
.nm { display: flex; align-items: center; font-size: 22.3px; white-space: nowrap; padding-left: 11px; }
.exp { width: 17px; height: 17px; background: #f6f6f6; position: relative; display: block; flex: none; margin-right: 11px; }
.exp svg { width: 16px; height: 16px; display: block; }
.exp.ln::after { content: ""; position: absolute; left: 7px; top: 17px; height: 24px; border-left: 2px dotted #aaa; }
.tic { width: 33px; height: 34px; flex: none; margin-left: -1px; }
.tic.chk0 { width: 30px; height: 32px; margin-right: 3px; margin-left: 0; }
.tic2 { width: 30px; height: 33px; flex: none; }
.t { margin-left: 6px; margin-top: -2px; }
.tic2 + .t { margin-left: 7px; }
.guide { width: 19px; height: 40px; flex: none; margin-left: 47px; border-left: 2px dotted #aaa; background: repeating-linear-gradient(90deg, #aaa 0 2px, transparent 2px 4px) center / 100% 2px no-repeat; }
.eye { width: 30px; height: 24px; flex: none; }
.fe { width: 30px; height: 32px; flex: none; margin-left: 3px; }
.fe + .t { margin-left: 7px; }
.vscroll { width: 33px; flex: none; background: #f0f0f0; display: flex; flex-direction: column; align-items: center; position: relative; }
.sarrow { width: 16px; height: 12px; margin: 12px 3px 0 0; flex: none; }
.sarrow.down { position: absolute; bottom: 12px; left: 7px; margin: 0; }
.vthumb { width: 30px; height: 638px; background: #cdcdcd; margin-top: 11px; margin-right: 3px; }
.hscroll { height: 36px; flex: none; background: #f0f0f0; display: flex; align-items: center; position: relative; }
.harrow { width: 12px; height: 16px; flex: none; margin-left: 12px; }
.hthumb { width: 366px; height: 31px; background: #cdcdcd; margin-left: 11px; }
.harrow.right { margin-left: 117px; }
.splitter { width: 580px; height: 10px; flex: none; background: #d6d6d6; border: solid #b0b0b0; border-width: 2px 0; }
.acc { width: 580px; height: 48px; flex: none; border-bottom: 4px solid #d8d8d8; display: flex; align-items: center; padding: 3px 0 0 19px; font-size: 25.5px; color: #2f7292; gap: 21px; }
.tri { width: 0; height: 0; border: 8px solid transparent; border-left: 8px solid #1f5f80; border-right: 0; }

.main { flex: 1; display: flex; flex-direction: column; min-width: 0; }
.tabs { height: 48px; flex: none; background: #fff; border-bottom: 4px solid #2a6186; display: flex; }
.tab { display: flex; align-items: center; font-size: 22.6px; height: 44px; padding-bottom: 3px; white-space: nowrap; }
.welcome { width: 254px; padding-left: 13px; gap: 9px; }
.home { width: 30px; height: 30px; }
.current { width: 308px; background: #285e85; color: #dde9ef; padding-left: 12px; gap: 13px; font-size: 22.2px; }
.tabpart { width: 26px; height: 26px; flex: none; }
.close { width: 16px; height: 16px; margin-left: auto; margin-right: 15px; flex: none; }
.view { flex: 1; position: relative; background: linear-gradient(180deg, #b4b6b9 0%, #cfd3d6 45%, #ebedf0 100%); overflow: hidden; }
.canvas { position: absolute; inset: 0; width: 100%; height: 100%; display: block; }
.wire { fill: none; stroke: #2b2b7a; stroke-width: 2; }
.wire * { vector-effect: non-scaling-stroke; }
.ax { font: 22px "Liberation Sans", sans-serif; }
.ay { fill: #6f9f8a; } .ax-x { fill: #d96a6a; } .az { fill: #5a6fe0; }

.status { height: 44px; flex: none; margin-left: 6px; background: #fff; border-top: 3px solid #c4c4c4; border-bottom: 1px solid #aab; }
```
